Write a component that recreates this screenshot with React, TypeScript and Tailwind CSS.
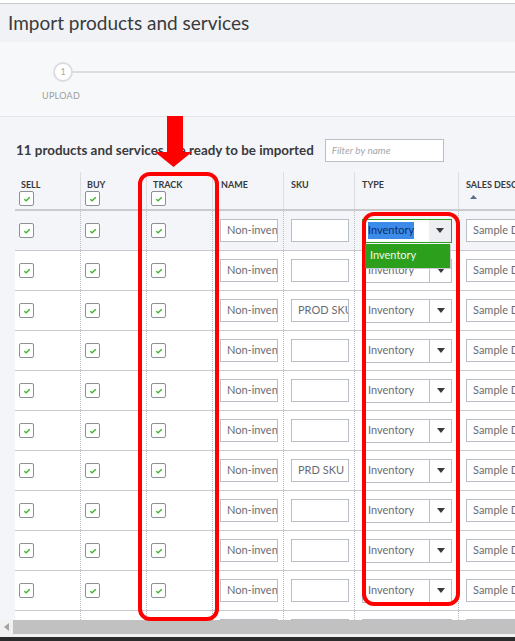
import React from 'react';

const rows = [
  { sku: '' },
  { sku: '' },
  { sku: 'PROD SKU' },
  { sku: '' },
  { sku: '' },
  { sku: '' },
  { sku: 'PRD SKU' },
  { sku: '' },
  { sku: '' },
  { sku: '' },
  { sku: '' },
];

function Check() {
  return (
    <div className="flex h-[15px] w-[15px] items-center justify-center rounded-[2px] border border-[#8d9096] bg-white">
      <svg width="8" height="6" viewBox="0 0 8 6">
        <path d="M1.3 3.2 L3.1 4.8 L6.8 1.3" fill="none" stroke="#3bb52a" strokeWidth="1.3" />
      </svg>
    </div>
  );
}

function Field({ value, w }: { value: string; w: string }) {
  return (
    <div
      className={`${w} flex h-[23px] items-center overflow-hidden whitespace-nowrap border border-[#babec5] bg-white pl-[6px] text-[11px] text-[#6b6c72]`}
    >
      {value}
    </div>
  );
}

function TypeSelect({ active }: { active: boolean }) {
  return (
    <div className="relative">
      <div
        className={`flex h-[24px] w-[90px] items-stretch border bg-white text-[11px] ${
          active ? 'border-[#2ca01c]' : 'border-[#babec5]'
        }`}
      >
        <div className="flex flex-1 items-center pl-[5px] text-[#6b6c72]">
          {active ? (
            <span className="bg-[#3d8be8] text-[#0d2c6b]">Inventory</span>
          ) : (
            'Inventory'
          )}
        </div>
        <div
          className={`flex w-[22px] items-center justify-center ${
            active ? 'bg-[#eceef1]' : 'border-l border-[#babec5]'
          }`}
        >
          <svg width="8" height="5" viewBox="0 0 8 5">
            <path d="M0 0 H8 L4 5 Z" fill="#393a3d" />
          </svg>
        </div>
      </div>
      {active && (
        <div className="absolute left-[3px] top-[25px] z-10 flex h-[24px] w-[85px] items-center bg-[#2ca01c] pl-[5px] text-[11px] text-[#eef8ea] shadow-[1px_1px_0_#c8cbd0]">
          Inventory
        </div>
      )}
    </div>
  );
}

const sep = 'border-r border-dotted border-[#b9bcc2]';

export default function App() {
  return (
    <div
      className="relative flex h-[641px] w-[515px] flex-col overflow-hidden bg-white pt-[3px]"
      style={{ fontFamily: 'Lato, "Open Sans", sans-serif' }}
    >
      {/* Page title */}
      <div className="flex h-[39px] items-center border-t border-[#c9cbcf] bg-[#f1f2f5] pl-[8px] text-[19px] text-[#393a3d]">
        Import products and services
      </div>

      {/* Stepper */}
      <div className="h-[75px] border-b border-[#e3e5e8] bg-[#f7f8fa]">
        <div className="flex items-center pl-[53px] pt-[20px]">
          <div className="flex h-[20px] w-[20px] items-center justify-center rounded-full border-2 border-[#dcdde0] bg-white text-[9px] text-[#a8aaae]">
            1
          </div>
          <div className="h-[2px] flex-1 bg-[#dcdde0]" />
        </div>
        <div className="pl-[42px] pt-[7px] text-[9px] tracking-[0.3px] text-[#9a9ca0]">UPLOAD</div>
      </div>

      {/* Content */}
      <div className="flex-1 overflow-hidden bg-[#f4f5f8] pl-[15px]">
        <div className="flex items-center pt-[22px]">
          <div className="pl-px text-[13.4px] font-bold text-[#393a3d]">
            11 products and services are ready to be imported
          </div>
          <div className="ml-[11px] flex h-[23px] w-[119px] items-center border border-[#babec5] bg-white pl-[6px] text-[10px] italic text-[#a6a8ad]">
            Filter by name
          </div>
        </div>

        <div className="mt-[10px] w-[560px] bg-white">
          {/* Header */}
          <div className="flex h-[39px] border-b-2 border-[#c9cbcf] bg-[#f4f5f8] text-[9px] font-bold text-[#393a3d]">
            {['SELL', 'BUY', 'TRACK'].map((h) => (
              <div key={h} className="flex w-[66px] flex-col border-r border-[#dcdde0] pl-[4px] pt-[7px]">
                <div className="pl-[2px] leading-[11px]">{h}</div>
                <div className="mt-px">
                  <Check />
                </div>
              </div>
            ))}
            <div className="w-[71px] border-r border-[#dcdde0] pl-[8px] pt-[7px] leading-[11px]">NAME</div>
            <div className="w-[71px] border-r border-[#dcdde0] pl-[7px] pt-[7px] leading-[11px]">SKU</div>
            <div className="w-[104px] border-r border-[#dcdde0] pl-[7px] pt-[7px] leading-[11px]">TYPE</div>
            <div className="flex-1 pl-[7px] pt-[7px] leading-[11px]">
              <div className="whitespace-nowrap">SALES DESCRIPTION</div>
              <svg className="ml-[4px] mt-[5px]" width="7" height="4" viewBox="0 0 7 4">
                <path d="M0 4 L3.5 0 L7 4 Z" fill="#5b6f8a" />
              </svg>
            </div>
          </div>

          {/* Rows */}
          {rows.map((r, i) => (
            <div
              key={i}
              className={`flex h-[40px] border-b border-[#c9cbcf] ${i === 0 ? 'bg-[#f4f5f8]' : 'bg-white'}`}
            >
              {[0, 1, 2].map((c) => (
                <div key={c} className={`flex w-[66px] items-center pl-[4px] ${sep}`}>
                  <Check />
                </div>
              ))}
              <div className={`flex w-[71px] items-center pl-[7px] ${sep}`}>
                <Field value="Non-inventory" w="w-[58px]" />
              </div>
              <div className={`flex w-[71px] items-center pl-[7px] ${sep}`}>
                <Field value={r.sku} w="w-[58px]" />
              </div>
              <div className={`flex w-[104px] items-center pl-[7px] ${sep}`}>
                <TypeSelect active={i === 0} />
              </div>
              <div className="flex flex-1 items-center pl-[7px]">
                <Field value="Sample Description" w="w-[90px]" />
              </div>
            </div>
          ))}
        </div>
      </div>

      {/* Horizontal scrollbar */}
      <div className="flex h-[14px] bg-[#f1f1f1]">
        <div className="flex w-[13px] items-center justify-center">
          <svg width="5" height="8" viewBox="0 0 5 8">
            <path d="M5 0 V8 L0 4 Z" fill="#a3a3a3" />
          </svg>
        </div>
        <div className="flex-1 bg-[#c1c1c1]" />
      </div>
      <div className="h-[3px] bg-[#f1f1f1]" />
      <div className="h-[4px] bg-[#2b2b2b]" />

      {/* Red annotations */}
      <svg className="absolute left-[155px] top-[116px]" width="37" height="51" viewBox="0 0 37 51">
        <path d="M12 0 H28 V36 H37 L18.5 51 L0 36 H12 Z" fill="#ff0000" />
      </svg>
      <div className="pointer-events-none absolute left-[138px] top-[172px] h-[449px] w-[81px] rounded-[12px] border-4 border-[#ff0000]" />
      <div className="pointer-events-none absolute left-[362px] top-[212px] h-[394px] w-[98px] rounded-[12px] border-4 border-[#ff0000]" />
    </div>
  );
}
